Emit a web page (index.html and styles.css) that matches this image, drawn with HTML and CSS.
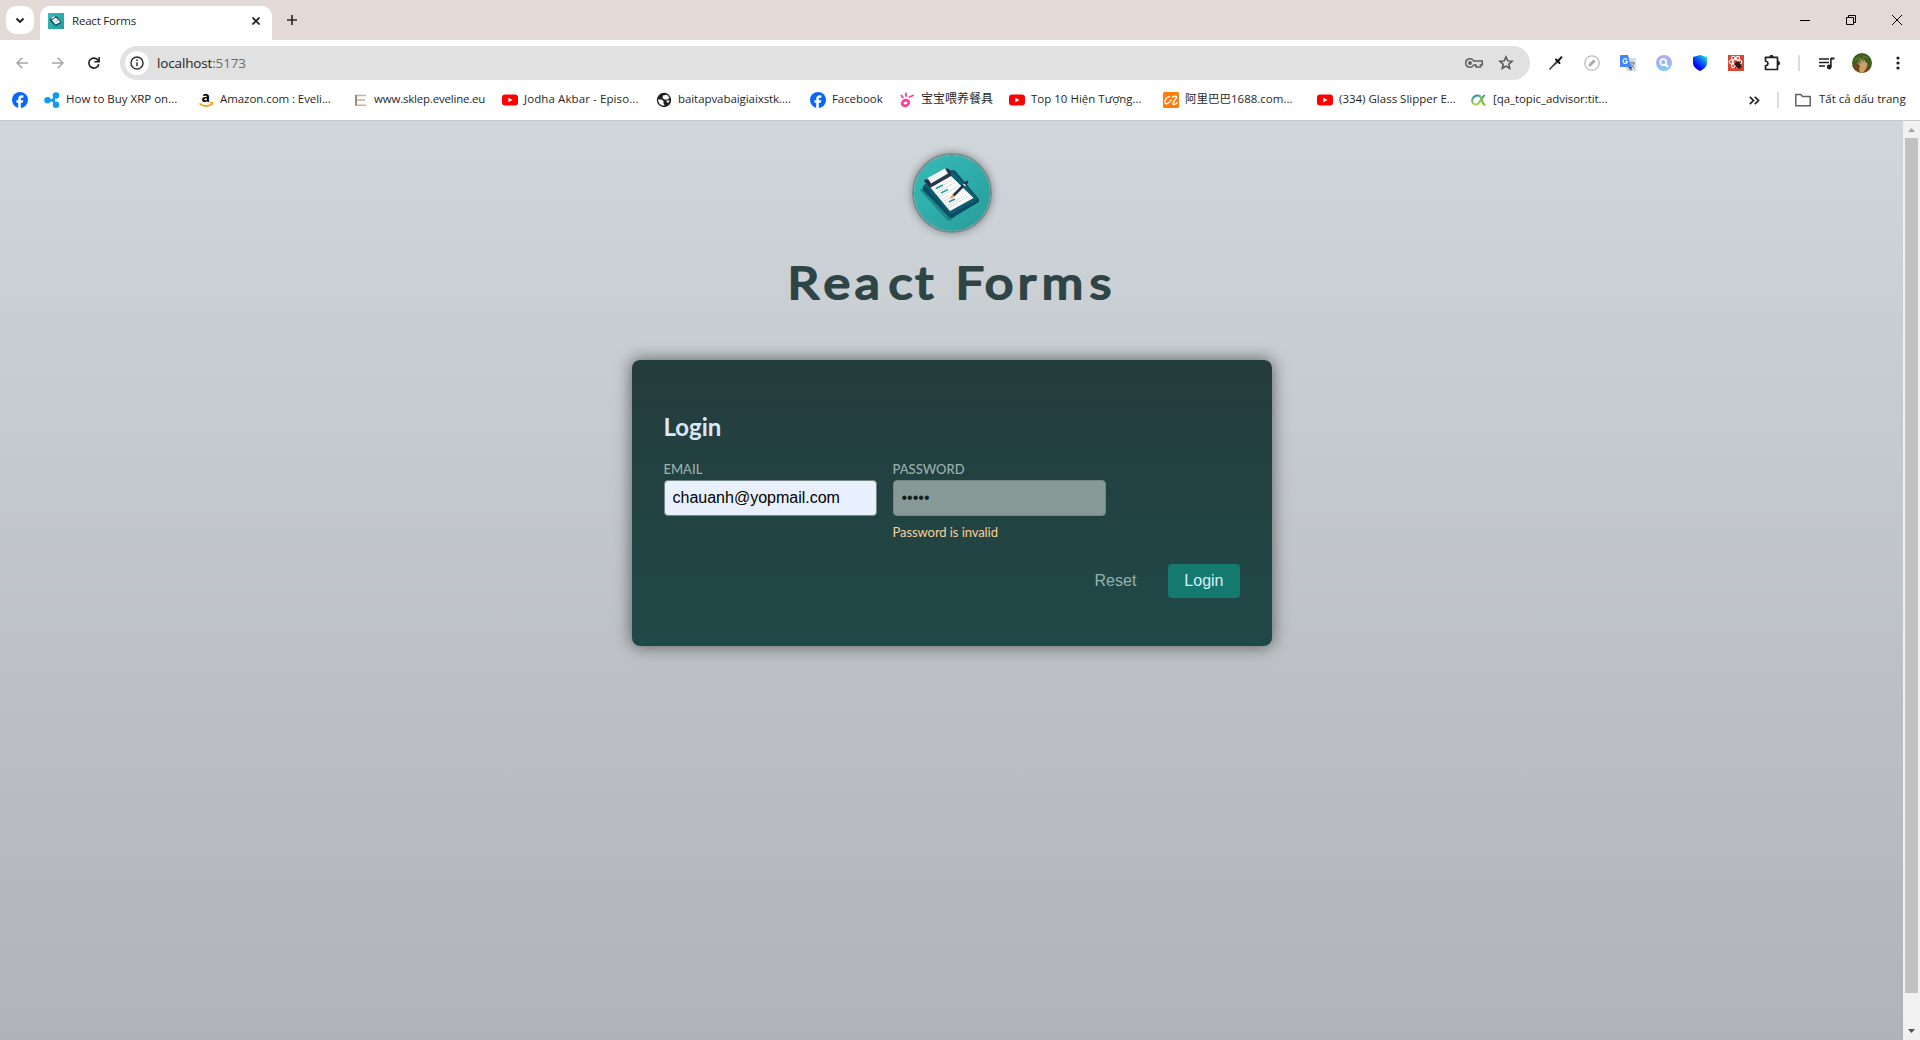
FILE: index.html
```html
<!DOCTYPE html>
<html lang="vi">
<head>
<meta charset="utf-8">
<title>React Forms</title>
<link rel="stylesheet" href="styles.css">
</head>
<body>
<svg class="defs" width="0" height="0">
  <defs>
    <linearGradient id="teal" x1="0" y1="0" x2="1" y2="1"><stop offset="0" stop-color="#36bdbb"/><stop offset="1" stop-color="#279b98"/></linearGradient>
    <linearGradient id="lens" x1="0" y1="0" x2="0" y2="1"><stop offset="0" stop-color="#b5a4fb"/><stop offset="1" stop-color="#7fcafa"/></linearGradient>
    <linearGradient id="shield" x1="1" y1="0" x2=".35" y2=".8"><stop offset="0" stop-color="#3dfbb0"/><stop offset=".5" stop-color="#0a72f0"/><stop offset="1" stop-color="#0000f5"/></linearGradient>
    <linearGradient id="cx" gradientUnits="userSpaceOnUse" x1="0" y1="3" x2="0" y2="13"><stop offset="0" stop-color="#1d93c9"/><stop offset="1" stop-color="#b5d334"/></linearGradient>
    <symbol id="clipboard" viewBox="0 0 80 80">
      <rect width="80" height="80" fill="url(#teal)"/>
      <path d="M8 37 12 34 44 63 38 68 35 67Z" fill="#1e8586"/>
      <path d="M11 33 40 17 43 17.500 67 46 67 49 41 64.500 38 65 11 37Z" fill="#0b4d63"/>
      <path d="M12 32 40 17 66 46 39 61.500Z" fill="#0f5f73"/>
      <path d="M18 34 38 22 61.500 45 38 58Z" fill="#fff"/>
      <path d="M13 28 35 16 40 22.500 18 35Z" fill="#2b3550"/>
      <path d="M14 28l3 2M35 17l2.500 2" stroke="#252d47" stroke-width="3.500" stroke-linecap="round"/>
      <path d="M15.500 25 33 15.500 36 20.500 19 30.500Z" fill="#f2f4f4"/>
      <path d="M23 37 40 27M25 39.500 43 29.500M28 44 46 33M30 46.500 37 42M32 48 39 44M33 50 42 45M35 53 54 42M36 55 56 43.500" stroke="#cbd1d0" stroke-width="1" stroke-dasharray="2 .6"/>
      <path d="M24 35.500 31 32M29 40 36 36.500M37 49 43 46" stroke="#20a89c" stroke-width="1.600"/>
      <path d="M42 42 55 29" stroke="#15384f" stroke-width="2.600" stroke-linecap="round"/>
      <path d="M37.500 46 40.500 41 43 43.500Z" fill="#f39343"/>
      <path d="M51.500 31 53.500 33" stroke="#fff" stroke-width="1.300"/>
    </symbol>
    <symbol id="facebook" viewBox="0 0 16 16">
      <circle cx="8" cy="8" r="8" fill="#0866ff"/>
      <path d="M6.200 16v-5.200H4.400V8.300h1.800V7.200c0-2.700 1.200-3.900 3.600-3.900.5 0 1.200.1 1.600.2v2.200h-.9c-1.300 0-1.700.5-1.700 1.600v1h2.500l-.5 2.500h-2V16Z" fill="#fff"/>
    </symbol>
    <symbol id="youtube" viewBox="0 0 16 16">
      <rect y="2.500" width="16" height="11" rx="3" fill="#f00"/><path d="M6.400 5.700 10.500 8 6.400 10.300Z" fill="#fff"/>
    </symbol>
  </defs>
</svg>

<div class="browser">
  <div class="tabstrip">
    <button class="tab-search"><svg width="28" height="28"><path d="m10.500 12.500 3.500 3.500 3.500-3.500" fill="none" stroke="#1f1f1f" stroke-width="1.900"/></svg></button>
    <div class="tab">
      <svg width="16" height="16"><use href="#clipboard"/></svg>
      <span class="tab-title">React Forms</span>
      <svg width="8" height="8"><path d="M.5.5l7 7M7.500.5l-7 7" stroke="#1f1f1f" stroke-width="1.700"/></svg>
    </div>
    <svg class="new-tab" width="12" height="12"><path d="M6 1v10M1 6h10" stroke="#2b2b2b" stroke-width="1.700"/></svg>
    <div class="window-buttons">
      <svg width="10" height="10"><path d="M0 5.500h10" stroke="#000"/></svg>
      <svg width="10" height="10" fill="none" stroke="#000"><path d="M.5 2.500h7v7h-7ZM2.500 2.500v-2h7v7h-2"/></svg>
      <svg width="10" height="10"><path d="M0 0l10 10M10 0 0 10" stroke="#000"/></svg>
    </div>
  </div>

  <div class="toolbar">
    <svg width="12" height="12" fill="none" stroke="#a5a5a5" stroke-width="1.500"><path d="M12 6H1M6.300.7 1 6l5.300 5.300"/></svg>
    <svg width="12" height="12" fill="none" stroke="#a5a5a5" stroke-width="1.500"><path d="M0 6h11M5.700.7 11 6l-5.300 5.300"/></svg>
    <svg width="12" height="12" fill="none" stroke="#1f1f1f" stroke-width="1.600"><path d="M10.800 7.200A5 5 0 1 1 10 3.200L11 4.500"/><path d="M11.100 0v4.700H6.500"/></svg>
    <div class="omnibox">
      <span class="site-info"><svg width="14" height="14" fill="none" stroke="#333" stroke-width="1.500"><circle cx="7" cy="7" r="6"/><path d="M7 6.200v4M7 3.600v1.400"/></svg></span>
      <span class="url">localhost<span>:5173</span></span>
      <svg width="18" height="12" fill="none" stroke="#5f6062" stroke-width="1.600"><path d="M8.700 4A4.300 4.300 0 1 0 8.700 8H11v2h4.500V8h1.700V4Z"/><circle cx="5" cy="6" r="1.900" fill="#5f6062" stroke="none"/></svg>
      <svg class="star" width="16" height="16" fill="none" stroke="#555" stroke-width="1.500"><path d="m8 1.900 1.800 4 4.300.4-3.300 2.900 1 4.300L8 11.200l-3.800 2.300 1-4.300L1.900 6.300l4.300-.4Z"/></svg>
    </div>
    <div class="extensions">
      <svg width="16" height="16"><path d="M2.500 13.500 9 5l2 2Z" fill="#3f8555"/><path d="M1.500 14.500 9.500 6" stroke="#35463b" stroke-width="1.600"/><path d="m8 4.500 3.500 3.500M10.500 5.500l3-3.300" stroke="#111" stroke-width="2" stroke-linecap="round"/></svg>
      <svg width="16" height="16"><circle cx="8" cy="8" r="7.200" fill="#fff" stroke="#bcbcbc" stroke-width="1.300"/><path d="m5.500 10.500 5-5" stroke="#aaa" stroke-width="3"/><path d="m4.300 11.700.5-2 1.500 1.500Z" fill="#aaa"/></svg>
      <svg width="16" height="16"><rect x="6" y="3" width="10" height="13" rx="1" fill="#d9dde0"/><path d="M9 8h6M12 6.500V8m2 0c-.5 2.500-2 4-4 5m.8-4c.7 2 2 3.300 3.500 4" stroke="#6b8190" fill="none"/><path d="M0 1q0-1 1-1h7l3 12H1q-1 0-1-1Z" fill="#4285f4"/><path d="m8 12 3.200 4 .8-4Z" fill="#3457bd"/><path d="M7.200 4.900A2.300 2.300 0 1 0 7.500 6.600H5.200" fill="none" stroke="#fff" stroke-width="1.100"/></svg>
      <svg width="16" height="16"><circle cx="8" cy="8" r="8" fill="url(#lens)"/><circle cx="7.300" cy="7.200" r="3" fill="none" stroke="#fff" stroke-width="1.700"/><path d="m9.500 9.500 2.600 2.600" stroke="#fff" stroke-width="1.900"/></svg>
      <svg width="16" height="16"><path d="M8 0 15 2v6c0 3.500-3 6-7 8-4-2-7-4.500-7-8V2Z" fill="url(#shield)"/></svg>
      <svg width="16" height="16"><rect width="16" height="16" fill="#d94636"/><g fill="none" stroke="#fff" stroke-width="1.100"><ellipse cx="7.500" cy="7" rx="6.300" ry="2.500"/><ellipse cx="7.500" cy="7" rx="6.300" ry="2.500" transform="rotate(60 7.500 7)"/><ellipse cx="7.500" cy="7" rx="6.300" ry="2.500" transform="rotate(120 7.500 7)"/></g><ellipse cx="10" cy="10" rx="2.600" ry="3.500" fill="#2e1815" transform="rotate(-35 10 10)"/><path d="m6 9 8 3M7 13l6-6M10 6l2 8" stroke="#2e1815"/></svg>
      <svg width="17" height="16" fill="none" stroke="#1f1f1f" stroke-width="1.700" stroke-linejoin="round"><path d="M1.500 2.300H13.500v12.200H1.500v-3.700c3.200-.7 3.200-4.100 0-4.800Z"/><path d="M6 2a1.500 1.500 0 0 1 3 0M14 6.700a1.500 1.500 0 0 1 0 3" fill="#1f1f1f" stroke-width="1.200"/></svg>
      <i class="divider"></i>
      <svg class="media" width="16" height="13"><path d="M0 2h10M0 5.500h10M0 9h6" stroke="#1f1f1f" stroke-width="1.600"/><path d="M12 1.500h3.500" stroke="#1f1f1f" stroke-width="2"/><path d="M11.900 1v9" stroke="#1f1f1f" stroke-width="1.600"/><circle cx="10.200" cy="10" r="2.400" fill="#1f1f1f"/></svg>
      <svg class="avatar" width="20" height="20"><clipPath id="face"><circle cx="10" cy="10" r="10"/></clipPath><g clip-path="url(#face)"><rect width="20" height="20" fill="#3d5f1d"/><path d="M0 13 9 9l11 7-7 4H3Z" fill="#74461f"/><path d="M8 20c-1-3-1-5 0-7L5 9l4 2-4-5 5 4-3-6 5 5-1-5 3 6c1-1 2 0 1 3-1 4-3 5-4 7Z" fill="#caa06a"/><path d="m2 8 5-4M11 3l5 2" stroke="#6a8933"/></g></svg>
      <svg class="menu" width="4" height="14" fill="#1f1f1f"><circle cx="2" cy="2" r="1.600"/><circle cx="2" cy="7" r="1.600"/><circle cx="2" cy="12" r="1.600"/></svg>
    </div>
  </div>

  <div class="bookmarks">
    <a><svg width="16" height="16"><use href="#facebook"/></svg></a>
    <a><svg width="16" height="16"><g stroke="#0b9cf0" stroke-width="2"><path d="M4 8.300h5l3-5M9 8.300l3 4.500" fill="none"/></g><g fill="#0b9cf0"><circle cx="3.500" cy="8.300" r="3.200"/><circle cx="12" cy="3.500" r="3.300"/><circle cx="12" cy="12.800" r="3.200"/><circle cx="9" cy="8.300" r="2"/></g></svg>How to Buy XRP on...</a>
    <a class="tight"><svg class="amazon" width="16" height="16"><text x="3.500" y="10">a</text><path d="M1.500 11.500c4 3.300 8.500 3 11.500.8" fill="none" stroke="#ff9900" stroke-width="1.600"/><path d="M11.500 10.700h3l-.8 3" fill="none" stroke="#ff9900" stroke-width="1.200"/></svg>Amazon.com : Eveli...</a>
    <a class="tighter"><svg width="16" height="16" fill="none" stroke="#c5b497" stroke-width="1.400"><path d="M14 3.500H4v9.700h10M4 8h9"/><path d="M4 3v10.500" stroke="#a08b6b" stroke-width="2"/></svg>www.sklep.eveline.eu</a>
    <a class="loose"><svg width="16" height="16"><use href="#youtube"/></svg>Jodha Akbar - Episo...</a>
    <a class="tight"><svg width="16" height="16"><circle cx="8" cy="8" r="7.200" fill="#1f1f1f"/><path d="M2 7.500h3.500l2 1.500v2.500l1.200 1.800c-3 1-6.500-1.500-6.700-5.800M7 3.500l4-.7 2.500 3-2 1.700H8.500l-2-1.500Z" fill="#fff"/><path d="m10 8.800 3.500-.5-1.300 3Z" fill="#fff"/></svg>baitapvabaigiaixstk....</a>
    <a class="tight"><svg width="16" height="16"><use href="#facebook"/></svg>Facebook</a>
    <a class="hanzi"><svg width="16" height="16" fill="none" stroke="#ff3d96" stroke-linecap="round"><ellipse cx="6.500" cy="11" rx="3.400" ry="2.700" stroke-width="2.700" transform="rotate(-25 6.500 11)"/><path d="m2.500 3.500 1.300 2M7 1.500v2.500M10.500 5l3.500-1.500" stroke-width="1.900"/></svg>宝宝喂养餐具</a>
    <a><svg width="16" height="16"><use href="#youtube"/></svg>Top 10 Hiện Tượng...</a>
    <a><svg width="16" height="16"><rect width="16" height="16" rx="1.500" fill="#ff7d0a"/><path d="M7 5C4.500 3.500 1.500 8 2 10.800c.8 2.400 5-.5 6.500-3.300M9 5.500c2.500-2 5-1.500 4.500 0S10.500 9 10 11.500c0 1.800 2.500.8 4.500-1" fill="none" stroke="#fff" stroke-width="1.400"/></svg>阿里巴巴1688.com...</a>
    <a><svg width="16" height="16"><use href="#youtube"/></svg>(334) Glass Slipper E...</a>
    <a class="tight"><svg width="16" height="16" fill="none" stroke="url(#cx)" stroke-width="2"><path d="M9 4.500C6.500 2.300 1.500 4 1.200 8.500c0 4.500 5 5.500 7.300 1.500L13.500 3"/><path d="M8.300 4c2.500-.5 2.200 9 6.200 8.800" stroke="#8cbd38" stroke-width="2.300"/></svg>[qa_topic_advisor:tit...</a>
    <svg class="more" width="11" height="9" fill="none" stroke="#1f1f1f" stroke-width="1.700"><path d="m.8.800 3.700 3.700L.8 8.200M5.800.8l3.700 3.700-3.700 3.700"/></svg>
    <i class="divider"></i>
    <a class="all"><svg width="16" height="16" fill="none" stroke="#5f6062" stroke-width="1.500"><path d="M.8 2.500h5l1.700 2h7.700v9.200H.8Z" stroke-linejoin="round"/></svg>Tất cả dấu trang</a>
  </div>
</div>

<div class="viewport">
  <div class="page">
    <header>
      <svg class="logo" width="76" height="76" viewBox="2 2 76 76"><use href="#clipboard" width="80" height="80"/></svg>
      <h1><svg width="340" height="60"><text transform="scale(1.12 1)" y="47" x="5 37 65 95 119 142 155 181 210.500 232 274.500">React Forms</text></svg></h1>
    </header>
    <form>
      <h2>Login</h2>
      <div class="controls">
        <div class="control">
          <label for="email">Email</label>
          <input id="email" class="autofilled" type="email" value="chauanh@yopmail.com">
        </div>
        <div class="control">
          <label for="password">Password</label>
          <input id="password" type="password" value="12345">
          <p class="error">Password is invalid</p>
        </div>
      </div>
      <p class="actions">
        <button type="button" class="reset">Reset</button>
        <button type="button" class="submit">Login</button>
      </p>
    </form>
  </div>
  <div class="scrollbar">
    <svg width="17" height="17"><path d="M5 11h7L8.500 7Z" fill="#a3a3a3"/></svg>
    <div class="thumb"></div>
    <svg width="17" height="17"><path d="M5 6h7l-3.500 4Z" fill="#505050"/></svg>
  </div>
</div>
</body>
</html>
```
FILE: styles.css
```css
* { box-sizing: border-box; }

body {
  margin: 0;
  height: 1040px;
  display: flex;
  flex-direction: column;
  overflow: hidden;
  font-family: "Lato", sans-serif;
}

svg { display: block; flex: none; }
.defs { position: absolute; }
button { font-family: "Liberation Sans", Arial, sans-serif; border: 0; padding: 0; }

/* Browser chrome */
.browser {
  height: 121px;
  flex: none;
  background: #fff;
  border-bottom: 1px solid #c5c9cb;
  font: 11.5px "Open Sans", "Noto Sans CJK SC", sans-serif;
  color: #1f1f1f;
}

.tabstrip {
  height: 40px;
  background: #e3dad7;
  display: flex;
  align-items: center;
  padding-left: 6px;
}

.tab-search { width: 28px; height: 28px; border-radius: 10px; background: #fff; }

.tab {
  align-self: flex-end;
  width: 232px;
  height: 34px;
  margin-left: 6px;
  padding: 0 12px 5px 8px;
  display: flex;
  align-items: center;
  gap: 8px;
  background: #fff;
  border-radius: 10px 10px 0 0;
}
.tab-title { flex: 1; letter-spacing: -.2px; padding-bottom: 1px; }
.new-tab { margin-left: 14px; }
.window-buttons { display: flex; gap: 36px; margin-left: auto; padding-right: 18px; }

.toolbar {
  height: 45px;
  display: flex;
  align-items: center;
  padding: 1px 18px 0 16px;
  gap: 24px;
}
.omnibox {
  flex: none;
  height: 34px;
  width: 1410px;
  margin-left: -4px;
  padding: 0 16px 0 5px;
  border-radius: 17px;
  background: #e1e1e1;
  display: flex;
  align-items: center;
}
.site-info {
  width: 24px;
  height: 24px;
  border-radius: 50%;
  background: #fff;
  display: grid;
  place-items: center;
}
.url { flex: 1; margin-left: 8px; font-size: 13.500px; letter-spacing: -.15px; }
.url span { color: #6a6a6a; }
.star { margin-left: 15px; }

.extensions { display: flex; align-items: center; gap: 20px; margin-left: -6px; }
.divider { width: 2px; height: 16px; background: #e3dad7; }
.extensions .divider { margin-left: -3px; }
.media { margin-left: -1px; }
.avatar { margin-left: -3px; }
.menu { margin-left: 4px; }

.bookmarks {
  height: 35px;
  padding: 0 0 5px 12px;
  display: grid;
  grid-template-columns: 32px 154px 154px 150px 154px 154px 89px 110px 154px 154px 154px 278px 28px 18px 1fr;
  align-items: center;
}
.bookmarks a { display: flex; align-items: center; gap: 6px; height: 16px; line-height: 14px; padding-bottom: 2px; white-space: nowrap; }
.bookmarks a svg { position: relative; top: 1px; }
.bookmarks .all { gap: 8px; }
.bookmarks .tight { letter-spacing: -.07px; }
.bookmarks .tighter { letter-spacing: -.2px; }
.bookmarks .loose { letter-spacing: .1px; }
.bookmarks .hanzi { font-size: 12px; }
.amazon { overflow: visible; }
.amazon text { font: bold 14px "Open Sans", sans-serif; }

/* Page */
.viewport { flex: 1; min-height: 0; display: flex; }
.page {
  flex: 1;
  background: linear-gradient(180deg, #d0d6da, #b0b3b8);
}

header {
  padding-top: 32px;
  display: flex;
  flex-direction: column;
  align-items: center;
}
.logo {
  box-sizing: content-box;
  border: 2px solid #738c8b;
  border-radius: 50%;
  box-shadow: 0 0 8px rgba(0, 0, 0, .4);
}
h1 { margin: 19px 0 0; }
h1 text {
  font: 400 45px "Lato", sans-serif;
  fill: #2f4545;
  stroke: #2f4545;
  stroke-width: 2.100px;
  stroke-linejoin: round;
}

form {
  width: 640px;
  height: 286px;
  margin: 48px auto 0;
  padding: 51px 32px 32px;
  border-radius: 8px;
  background: linear-gradient(180deg, #253c3c, #1f4948);
  box-shadow: 0 0 16px 1px rgba(0, 0, 0, .5);
}
h2 { margin: 0 0 17px; font-size: 24px; line-height: 32px; color: #dbe6f8; }

.controls { display: flex; gap: 16px; height: 98px; }
.control { width: 213px; }
label {
  display: block;
  height: 20px;
  line-height: 18px;
  font-size: 13px;
  font-weight: 500;
  text-transform: uppercase;
  color: #9bb0ae;
}
input {
  display: block;
  width: 100%;
  height: 36px;
  padding: 0 8px;
  border: 1px solid #728784;
  border-radius: 4px;
  background: #869997;
  font: 16px "Liberation Sans", Arial, sans-serif;
  color: #142020;
}
.autofilled { background: #e8f0fe; color: #000; }
.error { margin: 7px 0 0; font-size: 13px; line-height: 18px; color: #f9cf9a; letter-spacing: -.07px; }

.actions { display: flex; justify-content: flex-end; margin: 6px 0 0; gap: 16px; }
.actions button { height: 34px; padding: 0 16px; border-radius: 4px; font-size: 16px; }
.reset { background: none; color: #93b3b1; }
.submit { background: #147a70; color: #d9f0ff; }

.scrollbar { width: 17px; background: #f1f1f1; display: flex; flex-direction: column; }
.thumb { flex: 1; margin: 0 2px 30px; background: #c1c1c1; }
```
